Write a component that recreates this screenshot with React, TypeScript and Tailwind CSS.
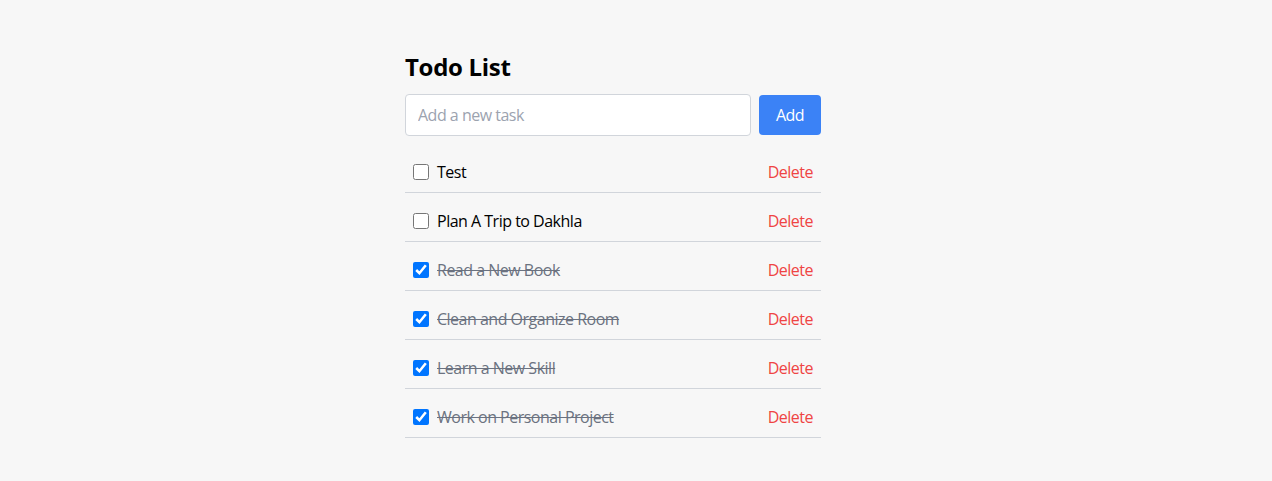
import React, { useState } from "react";

type Todo = { id: number; text: string; done: boolean };

const initialTodos: Todo[] = [
  { id: 1, text: "Test", done: false },
  { id: 2, text: "Plan A Trip to Dakhla", done: false },
  { id: 3, text: "Read a New Book", done: true },
  { id: 4, text: "Clean and Organize Room", done: true },
  { id: 5, text: "Learn a New Skill", done: true },
  { id: 6, text: "Work on Personal Project", done: true },
];

const App = () => {
  const [todos, setTodos] = useState<Todo[]>(initialTodos);
  const [task, setTask] = useState("");

  const addTodo = () => {
    if (!task.trim()) return;
    setTodos([...todos, { id: Date.now(), text: task, done: false }]);
    setTask("");
  };

  const toggle = (id: number) =>
    setTodos(todos.map((t) => (t.id === id ? { ...t, done: !t.done } : t)));

  const remove = (id: number) => setTodos(todos.filter((t) => t.id !== id));

  return (
    <div
      className="min-h-[481px] bg-[#f7f7f7] pr-[46px] pt-[51px] tracking-[-0.5px]"
      style={{ fontFamily: '"Open Sans", "Noto Sans", sans-serif' }}
    >
      <div className="mx-auto w-[416px]">
        {/* Title */}
        <h1 className="mb-[11px] text-2xl font-bold leading-8 text-black tracking-[-0.3px]">
          Todo List
        </h1>

        {/* Input row */}
        <div className="mb-4 flex items-center gap-2">
          <input
            type="text"
            value={task}
            onChange={(e) => setTask(e.target.value)}
            placeholder="Add a new task"
            className="h-[42px] flex-1 rounded border border-[#d1d5db] bg-white px-3 text-base text-black placeholder:text-[#9ca3af] outline-none"
          />
          <button
            onClick={addTodo}
            className="h-10 w-[62px] rounded bg-[#3b82f6] text-base text-white"
          >
            Add
          </button>
        </div>

        {/* Todo items */}
        <ul>
          {todos.map((todo) => (
            <li
              key={todo.id}
              className="mb-2 flex items-center justify-between border-b border-[#d1d5db] px-2 py-2"
            >
              <label className="flex items-center">
                <input
                  type="checkbox"
                  checked={todo.done}
                  onChange={() => toggle(todo.id)}
                  className="mr-2 h-4 w-4"
                />
                <span
                  className={`text-base leading-6 ${
                    todo.done ? "text-[#6b7280] line-through" : "text-black"
                  }`}
                >
                  {todo.text}
                </span>
              </label>
              <button onClick={() => remove(todo.id)} className="text-base leading-6 text-[#ef4444]">
                Delete
              </button>
            </li>
          ))}
        </ul>
      </div>
    </div>
  );
};

export default App;
